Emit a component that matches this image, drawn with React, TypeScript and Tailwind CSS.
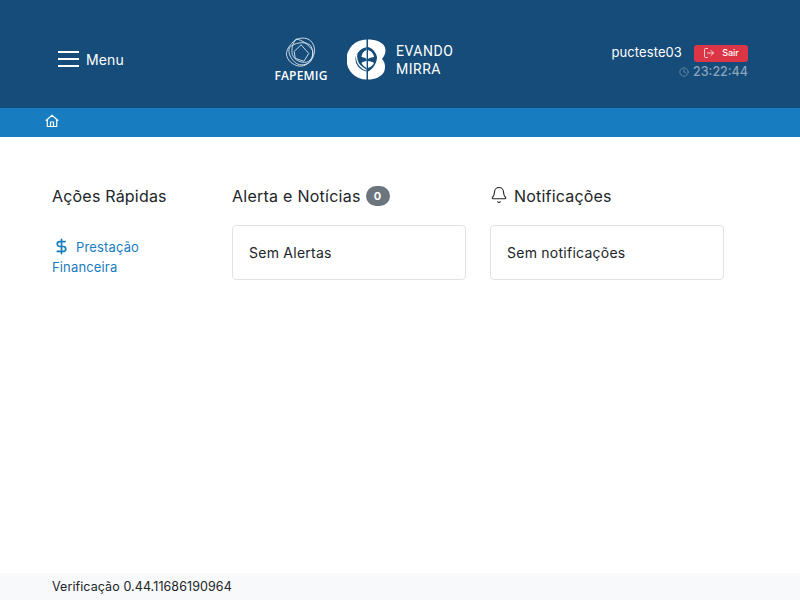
import { Bell, Clock, DollarSign, LogOut } from 'lucide-react'

function FapemigLogo() {
  return (
    <div className="flex flex-col items-center w-[54px]">
      <svg width="32" height="31" viewBox="0 0 32 32" fill="none" stroke="#e3ebf1" strokeWidth="0.9">
        <path d="M8 5C13 0 22 0 26 4c4 4 5 10 3 15-2 6-8 12-15 11C8 29 2 25 1 18 1 13 4 9 8 5z" />
        <path d="M4 11c5-5 15-7 21-3 4 4 4 12 1 17-4 4-11 5-15 2C6 24 2 16 4 11z" />
        <path d="M11 2c6 1 13 6 17 12 1 5-1 10-6 12-6 1-13-2-15-8-1-6 0-11 4-16z" />
        <path d="M9 15l7-7 8 9-5 8-9-3z" />
      </svg>
      <span className="text-[12px] leading-[13px] font-semibold tracking-[0.2px] text-white mt-[1px] font-['Open_Sans',sans-serif]">FAPEMIG</span>
    </div>
  )
}

function EvandoLogo() {
  return (
    <div className="flex items-center gap-[8px]">
      <svg width="41" height="41" viewBox="0 0 41 41">
        <path d="M19.500 0.500A20 20 0 0 0 19.500 40.500z" fill="#fff" />
        <path d="M21 0.500c7 0 13 2 16 6 3 5 1 10-2 13.500 3 3 4 8 2 13-3 5-9 7.500-16 7.500z" fill="#fff" />
        <path d="M19.500 8c-3 1-8 3-10 7-2 5-1 10 3 14 2 2 5 3 7 3.500z" fill="#154c79" />
        <path d="M21 8c4 1 8 5 9 10 0 6-4 12-9 14.500z" fill="#154c79" />
        <path d="M17 7c-5 3-9 8-7 14 1 5 5 8 9 10" fill="none" stroke="#fff" strokeWidth="1.300" />
        <path d="M19.500 11c-3 1-5 4-5 7 2 0 4 1 5 2zM21 11c3 1 6 4 6 7-2 0-5 1-6 2zM19.500 22c-2 0-4 1-5 2 1 2 3 4 5 5zM21 22c2 0 5 1 6 2-1 2-3 4-6 5z" fill="#fff" />
      </svg>
      <div className="flex flex-col text-white text-[14px] leading-[18px] tracking-[0.5px] font-['Roboto',sans-serif] mt-[1px]">
        <span>EVANDO</span>
        <span>MIRRA</span>
      </div>
    </div>
  )
}

function Header() {
  return (
    <header className="h-[108px] bg-[#154c79] flex items-center pl-[58px] pr-[52px] pt-[10px] text-white">
      <div className="flex items-center gap-[7px] w-[216px]">
        <div className="flex flex-col gap-[5px] w-[21px]">
          <span className="h-[2px] bg-white" />
          <span className="h-[2px] bg-white" />
          <span className="h-[2px] bg-white" />
        </div>
        <span className="text-[14px] font-normal tracking-[0.1px]">Menu</span>
      </div>
      <div className="flex items-center gap-[19px] mt-[1px]">
        <FapemigLogo />
        <EvandoLogo />
      </div>
      <div className="ml-auto flex flex-col items-end mt-[7px]">
        <div className="flex items-center gap-[12px]">
          <span className="text-[13px] font-normal tracking-[0.1px]">pucteste03</span>
          <span className="h-[17px] w-[54px] rounded-[3px] bg-[#dc3545] flex items-center justify-center gap-[7px] text-[9px] font-medium">
            <LogOut size={12} strokeWidth={1.5} />
            Sair
          </span>
        </div>
        <div className="flex items-center gap-[4px] text-[#8ba4ba] text-[12.5px] font-medium">
          <Clock size={10} strokeWidth={1.5} />
          <span>23:22:44</span>
        </div>
      </div>
    </header>
  )
}

function HomeIcon() {
  return (
    <svg width="14" height="14" viewBox="0 0 14 14" fill="none" stroke="#fff" strokeWidth="1.200">
      <path d="M0.800 6.800L7 1.300l6.200 5.500M2.300 5.800v6.700h9.400V5.800M5.500 12.500V8h3v4.500" />
    </svg>
  )
}

function Card({ text }: { text: string }) {
  return (
    <div className="mt-[16px] h-[55px] w-[234px] border border-[#dfe2e6] rounded-[4px] bg-white flex items-center px-[16px] text-[14px] tracking-[0.25px] text-[#212529]">
      {text}
    </div>
  )
}

export default function App() {
  return (
    <div className="min-h-[600px] flex flex-col bg-white font-['Inter',sans-serif]">
      <Header />
      <nav className="h-[29px] bg-[#187cc0] flex items-center pl-[45px] pb-[3px]">
        <HomeIcon />
      </nav>
      <main className="flex-1 flex pl-[52px] pt-[46px] text-[#212529]">
        <section className="w-[180px]">
          <h2 className="text-[16px] leading-[26px] tracking-[0.2px]">Ações Rápidas</h2>
          <a className="block mt-[28px] w-[110px] text-[13px] leading-[20px] tracking-[0.15px] text-[#187cc0]">
            <DollarSign size={17} strokeWidth={2.4} className="inline ml-[1px] mr-[6px] align-[-3px]" />
            Prestação Financeira
          </a>
        </section>
        <section className="w-[258px]">
          <h2 className="flex items-center gap-[5px] text-[16px] leading-[26px] tracking-[0.25px]">
            Alerta e Notícias
            <span className="h-[20px] w-[24px] rounded-full bg-[#6c757d] text-white text-[11px] font-bold flex items-center justify-center">0</span>
          </h2>
          <Card text="Sem Alertas" />
        </section>
        <section className="w-[234px]">
          <h2 className="flex items-center gap-[6px] text-[16px] leading-[26px] tracking-[0.2px]">
            <Bell size={18} strokeWidth={1.5} className="mt-[-3px]" />
            Notificações
          </h2>
          <Card text="Sem notificações" />
        </section>
      </main>
      <footer className="h-[27px] bg-[#f8f9fa] pl-[52px] pt-[2px] flex items-center text-[12.5px] tracking-[0.08px] text-[#212529]">
        Verificação 0.44.11686190964
      </footer>
    </div>
  )
}
